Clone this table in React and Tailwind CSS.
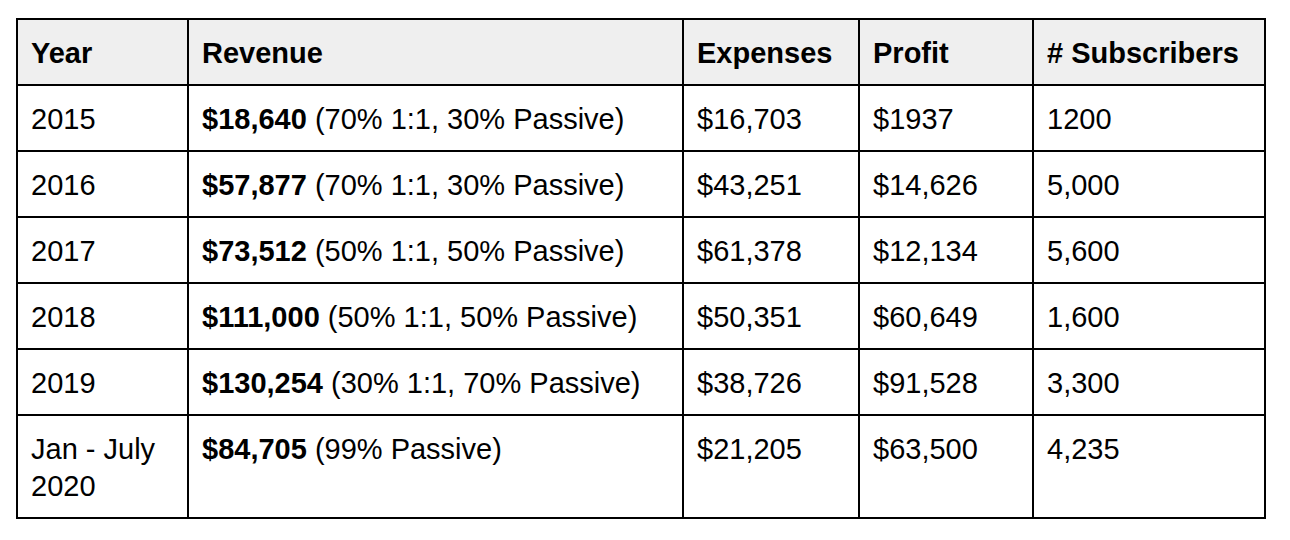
import React from 'react';

const rows = [
  { year: '2015', rev: '$18,640', split: '(70% 1:1, 30% Passive)', exp: '$16,703', profit: '$1937', subs: '1200' },
  { year: '2016', rev: '$57,877', split: '(70% 1:1, 30% Passive)', exp: '$43,251', profit: '$14,626', subs: '5,000' },
  { year: '2017', rev: '$73,512', split: '(50% 1:1, 50% Passive)', exp: '$61,378', profit: '$12,134', subs: '5,600' },
  { year: '2018', rev: '$111,000', split: '(50% 1:1, 50% Passive)', exp: '$50,351', profit: '$60,649', subs: '1,600' },
  { year: '2019', rev: '$130,254', split: '(30% 1:1, 70% Passive)', exp: '$38,726', profit: '$91,528', subs: '3,300' },
  { year: 'Jan - July 2020', rev: '$84,705', split: '(99% Passive)', exp: '$21,205', profit: '$63,500', subs: '4,235' },
];

const cell = 'border-2 border-black align-top pl-[13px] pr-2 pt-[15px] pb-[12px]';

export default function App() {
  return (
    <div className="w-[1290px] h-[540px] bg-white pt-[18px] pl-[16px] text-black text-[29px] leading-[37px] font-['Liberation_Sans',Arial,sans-serif]">
      <table className="table-fixed border-collapse w-[1250px]">
        <colgroup>
          <col className="w-[171px]" />
          <col className="w-[495px]" />
          <col className="w-[176px]" />
          <col className="w-[174px]" />
          <col className="w-[232px]" />
        </colgroup>
        <thead>
          <tr className="bg-[#efefef] font-bold text-left">
            <th className={cell}>Year</th>
            <th className={cell}>Revenue</th>
            <th className={cell}>Expenses</th>
            <th className={cell}>Profit</th>
            <th className={cell}># Subscribers</th>
          </tr>
        </thead>
        <tbody>
          {rows.map((r) => (
            <tr key={r.year}>
              <td className={cell}>{r.year}</td>
              <td className={cell}>
                <span className="font-bold">{r.rev}</span> {r.split}
              </td>
              <td className={cell}>{r.exp}</td>
              <td className={cell}>{r.profit}</td>
              <td className={cell}>{r.subs}</td>
            </tr>
          ))}
        </tbody>
      </table>
    </div>
  );
}
